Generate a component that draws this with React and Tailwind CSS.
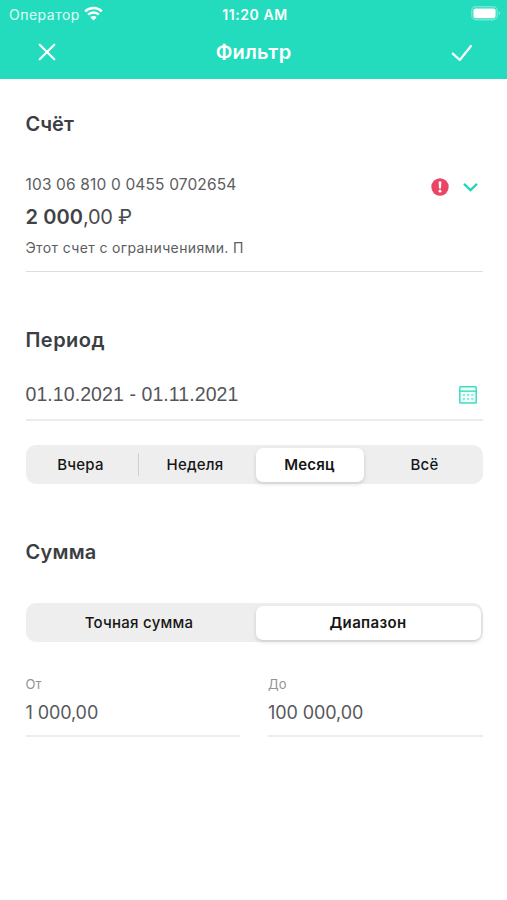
import React from 'react';

const periods = [
  { id: 'yesterday', label: 'Вчера', tab: 'w-[113px] pr-[2px]' },
  { id: 'week', label: 'Неделя', tab: 'w-[117px] pr-[4px]' },
  { id: 'month', label: 'Месяц', tab: 'w-[108px]' },
  { id: 'all', label: 'Всё', tab: 'w-[119px] pl-[3px]' },
];

const WifiIcon = () => (
  <svg className="w-[19px] h-[15px] relative -top-px" viewBox="0 0 19 15" fill="none" stroke="currentColor" strokeWidth="2.5">
    <path d="M1.2 5.3a12 12 0 0 1 16.6 0" />
    <path d="M4.1 8.7a7.8 7.8 0 0 1 10.8 0" />
    <path d="M9.5 14.4 6.3 11.2a4.6 4.6 0 0 1 6.4 0z" fill="currentColor" stroke="none" />
  </svg>
);

const BatteryIcon = () => (
  <svg className="w-[30px] h-[15px] relative -top-px" viewBox="0 0 30 15" fill="none">
    <rect x="0.8" y="0.8" width="25.4" height="13" rx="4" stroke="#fff" strokeOpacity="0.35" strokeWidth="1.4" />
    <rect x="2.4" y="2.4" width="22.2" height="9.8" rx="2.2" fill="#fff" />
    <path d="M27.8 5.2c1.6.7 1.6 3.3 0 4z" fill="#fff" fillOpacity="0.45" />
  </svg>
);

const CalendarIcon = () => (
  <svg className="w-[18px] h-[18px]" viewBox="0 0 18 18" fill="none" stroke="#3fdcc4">
    <rect x="0.8" y="0.8" width="16.4" height="16.2" rx="0.8" fill="#effcfa" strokeWidth="1.5" />
    <path d="M1 5.2h16" strokeWidth="1.4" />
    <path d="M3.8 8.8h2.2M8 8.8h2.2M12.2 8.8h2.2M3.8 12.8h2.2M8 12.8h2.2M12.2 12.8h2.2" strokeWidth="1.7" strokeOpacity="0.65" />
  </svg>
);

const Header = () => (
  <header className="h-[79px] bg-[#22dcbd] text-white">
    <div className="grid grid-cols-3 items-center h-7 pl-[9px] pr-[6px]">
      <div className="flex items-center gap-[4px]">
        <span className="text-[14px] tracking-[0.5px] text-white/85">Оператор</span>
        <WifiIcon />
      </div>
      <span className="text-center text-[14px] font-semibold tracking-[0.6px] whitespace-nowrap">11:20 AM</span>
      <div className="flex justify-end">
        <BatteryIcon />
      </div>
    </div>
    <div className="flex items-center justify-between h-12 pl-[38px] pr-[34px]">
      <button aria-label="Закрыть">
        <svg className="w-[18px] h-[18px]" viewBox="0 0 18 18" fill="none" stroke="currentColor" strokeWidth="2.2" strokeLinecap="round">
          <path d="M1.7 1.7l14.6 14.6M16.3 1.7L1.7 16.3" />
        </svg>
      </button>
      <h1 className="text-[20px] font-semibold tracking-[0.2px]">Фильтр</h1>
      <button aria-label="Применить">
        <svg className="w-[22px] h-[18px]" viewBox="0 0 22 18" fill="none" stroke="currentColor" strokeWidth="2.2" strokeLinecap="round">
          <path d="M1.8 10.6l7 6.4L20 3" />
        </svg>
      </button>
    </div>
  </header>
);

const AmountField = ({ label, value }) => (
  <div className="flex-1 border-b-2 border-[#ededed] h-[62px]">
    <div className="text-[13px] leading-[18px] text-[#939496]">{label}</div>
    <div className="mt-[8px] text-[18px] leading-6 tracking-[-0.1px] text-[#57585b]">{value}</div>
  </div>
);

export default function App() {
  return (
    <div className="w-full h-[900px] bg-white font-['Inter',sans-serif] text-[#3b3e43]">
      <Header />

      <main className="pl-[25.5px] pr-[24.5px]">
        {/* Account */}
        <section className="pt-[31px]">
          <h2 className="text-[20px] leading-7 font-semibold">Счёт</h2>
          <div className="flex justify-between mt-[36px] h-[98px] border-b border-[#dedede]">
            <div>
              <div className="pt-px text-[15.5px] leading-5 tracking-[0.15px] text-[#5c5d60]">103 06 810 0 0455 0702654</div>
              <div className="mt-[8px] text-[20px] leading-7 tracking-[-0.3px] text-[#4a4c50]">
                <span className="font-semibold tracking-[0.1px] text-[#3f4246]">2 000</span>,00 ₽
              </div>
              <div className="mt-[7px] text-[14px] leading-5 tracking-[0.37px] text-[#5c5d60]">
                Этот счет с ограничениями. П
              </div>
            </div>
            <div className="flex items-center gap-[14px] h-[26px] pr-[5px]">
              <svg className="w-[18px] h-[18px]" viewBox="0 0 18 18">
                <circle cx="9" cy="9" r="8.7" fill="#ea4564" />
                <path d="M7.6 3.4h2.8l-.4 7H8z" fill="#fff" />
                <circle cx="9" cy="13.2" r="1.4" fill="#fff" />
              </svg>
              <svg className="w-[15px] h-[10px]" viewBox="0 0 15 10" fill="none" stroke="#25d5b8" strokeWidth="2.3">
                <path d="M1 1.8l6.5 6.3L14 1.8" />
              </svg>
            </div>
          </div>
        </section>

        {/* Period */}
        <section className="pt-[54px]">
          <h2 className="text-[20px] leading-7 font-semibold tracking-[0.45px]">Период</h2>
          <div className="flex items-center justify-between mt-[15px] h-[52px] pt-px pr-[6px] border-b-2 border-[#ebebeb]">
            <span className="pt-px font-['Liberation_Sans',sans-serif] text-[19.5px] tracking-[0.08px] text-[#55565a]">
              01.10.2021 - 01.11.2021
            </span>
            <CalendarIcon />
          </div>
          <div className="flex items-center mt-6 h-[39px] rounded-[10px] bg-[#eeeeee] text-[15px] font-medium tracking-[0.2px] text-[#161616]">
            {periods.map((p) => (
              <button
                key={p.id}
                className={`${p.tab} flex items-center justify-center pt-px ${
                  p.id === 'month'
                    ? 'h-[34px] rounded-[7px] bg-white font-semibold shadow-[0_2px_4px_rgba(0,0,0,0.14)]'
                    : p.id === 'yesterday'
                      ? 'h-[23px] border-r border-[#cfcfcf]'
                      : 'h-[34px]'
                }`}
              >
                {p.label}
              </button>
            ))}
          </div>
        </section>

        {/* Amount */}
        <section className="pt-[54px]">
          <h2 className="text-[20px] leading-7 font-semibold tracking-[0.2px]">Сумма</h2>
          <div className="flex items-center mt-[37px] h-[39px] pr-[2px] rounded-[10px] bg-[#eeeeee] text-[15px] text-[#161616]">
            <button className="flex-1 pt-px pr-[3px] font-medium tracking-[0.25px]">Точная сумма</button>
            <button className="w-[225px] h-[34px] pt-px rounded-[7px] bg-white font-semibold tracking-[0.35px] shadow-[0_2px_4px_rgba(0,0,0,0.14)]">
              Диапазон
            </button>
          </div>
          <div className="flex gap-[28px] mt-[33px]">
            <AmountField label="От" value="1 000,00" />
            <AmountField label="До" value="100 000,00" />
          </div>
        </section>
      </main>
    </div>
  );
}
